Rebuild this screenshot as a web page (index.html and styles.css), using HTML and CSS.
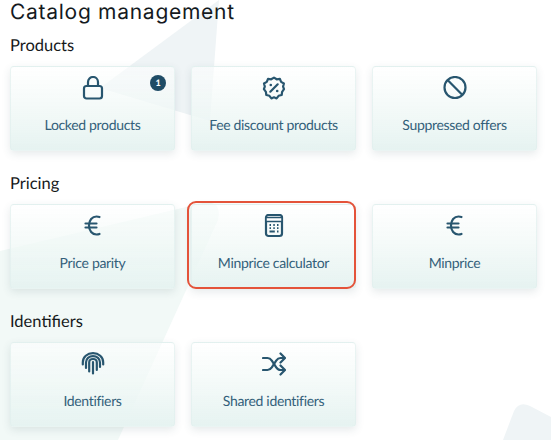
FILE: index.html
```html
<!DOCTYPE html>
<html lang="en">
<head>
<meta charset="utf-8">
<title>Catalog management</title>
<link rel="stylesheet" href="styles.css">
</head>
<body>
<svg class="backdrop" viewBox="0 0 551 440" aria-hidden="true">
  <path class="shape-grey" d="M219 0 L210 121 L100 88 Z"/>
  <path class="shape-green" d="M0 251 L203 203 Q222 200 218 220 L118 440 L0 440 Z"/>
  <path class="shape-grey" d="M503 440 L514 411 Q519 401 530 406 L551 417 L551 440 Z"/>
</svg>
<main class="page">
  <h1 class="title">Catalog management</h1>

  <section class="group">
    <h2 class="group-title">Products</h2>
    <div class="cards">
      <a class="card">
        <span class="badge">1</span>
        <svg class="icon" viewBox="0 0 24 24"><rect x="3" y="10" width="18" height="12.500" rx="2.500"/><path d="M7 10V6a5 5 0 0 1 10 0v4"/></svg>
        <span class="label">Locked products</span>
      </a>
      <a class="card">
        <svg class="icon" viewBox="0 0 24 24"><path d="M12 1.600l2.700 1.700 3.200-.4 1.200 3 2.800 1.600-.8 3.100.9 2.600-1.900 2.600-.4 3.200-3.100.8-2 2.600-2.600-1.100-2.600 1.100-2-2.600-3.100-.8-.4-3.200L1.900 13.200l.9-2.600L2 7.500l2.800-1.600 1.200-3 3.200.4z"/><path d="M8.300 15.700l7.400-7.400"/><circle class="dot" cx="8.800" cy="9" r="1.300"/><circle class="dot" cx="15.200" cy="15" r="1.300"/></svg>
        <span class="label">Fee discount products</span>
      </a>
      <a class="card">
        <svg class="icon" viewBox="0 0 24 24"><circle cx="12" cy="11.500" r="10.500"/><path d="M4.800 4.300l14.400 14.400"/></svg>
        <span class="label">Suppressed offers</span>
      </a>
    </div>
  </section>

  <section class="group">
    <h2 class="group-title">Pricing</h2>
    <div class="cards">
      <a class="card">
        <svg class="icon" viewBox="0 0 24 24"><path d="M18.500 3a9 9 0 0 0-3-.5C11.200 2.500 8 6.300 8 11.500s3.200 9 7.500 9a9 9 0 0 0 3-.5"/><path d="M4.500 9.500h11M4.500 13.500h11"/></svg>
        <span class="label">Price parity</span>
      </a>
      <a class="card card-selected">
        <svg class="icon" viewBox="0 0 24 24"><rect x="4" y="1" width="16" height="21" rx="2.500"/><path class="fill" d="M4 3.500h16v4H4z"/><path class="keys" d="M7.500 11h1.500M11.300 11h1.500M15 11h1.500M7.500 14.200h1.500M11.300 14.200h1.500M15 14.200h1.500M7.500 17.500h5.300M15 17.500h1.500"/></svg>
        <span class="label">Minprice calculator</span>
      </a>
      <a class="card">
        <svg class="icon" viewBox="0 0 24 24"><path d="M18.500 3a9 9 0 0 0-3-.5C11.200 2.500 8 6.300 8 11.500s3.200 9 7.500 9a9 9 0 0 0 3-.5"/><path d="M4.500 9.500h11M4.500 13.500h11"/></svg>
        <span class="label">Minprice</span>
      </a>
    </div>
  </section>

  <section class="group">
    <h2 class="group-title">Identifiers</h2>
    <div class="cards">
      <a class="card">
        <svg class="icon" viewBox="0 0 24 24"><path d="M1.800 12.500V10.500C1.800 5 6.300 1.200 12 1.200S22.200 5 22.200 10.500v2"/><path d="M5 16v-5.500c0-3.800 3.100-6.400 7-6.400s7 2.600 7 6.400V15"/><path d="M8.200 19.500v-9c0-2.100 1.700-3.500 3.800-3.500s3.800 1.400 3.800 3.500V18"/><path d="M12 10v11.500"/></svg>
        <span class="label">Identifiers</span>
      </a>
      <a class="card">
        <svg class="icon" viewBox="0 0 24 24"><path d="M1 6h4.500c2 0 3.200 1 4.300 2.600l4.400 6.800c1 1.600 2.200 2.600 4.300 2.600H22"/><path d="M1 18h4.500c2 0 3.200-1 4.300-2.600l4.400-6.800C15.300 7 16.500 6 18.500 6H22"/><path d="M18.500 1.500L23 6l-4.500 4.500M18.500 13.500L23 18l-4.500 4.500"/></svg>
        <span class="label">Shared identifiers</span>
      </a>
    </div>
  </section>
</main>
</body>
</html>
```

FILE: styles.css
```css
* { box-sizing: border-box; }

html, body {
  margin: 0;
  height: 440px;
  overflow: hidden;
  background: #fff;
}

body {
  position: relative;
  font-family: "Lato", "Liberation Sans", sans-serif;
  text-rendering: geometricPrecision;
}

.backdrop {
  position: absolute;
  inset: 0;
  width: 551px;
  height: 440px;
}

.shape-grey { fill: #eff4f6; }
.shape-green { fill: #f2f9f7; }

.page {
  position: relative;
  padding: 0 10px;
}

.title {
  margin: 0;
  height: 33px;
  font-family: "Inter", "Open Sans", sans-serif;
  font-size: 21px;
  font-weight: 400;
  line-height: 26px;
  letter-spacing: 0.72px;
  color: #141a1e;
}

.group { height: 138px; }

.group-title {
  margin: 0;
  height: 33px;
  padding-top: 2px;
  font-size: 16.500px;
  font-weight: 400;
  line-height: 21px;
  color: #16191b;
}

.cards {
  display: grid;
  grid-template-columns: repeat(3, 165px);
  gap: 16px;
}

.card {
  position: relative;
  display: flex;
  flex-direction: column;
  align-items: center;
  height: 85px;
  padding-top: 9px;
  border: 1px solid rgba(225, 240, 238, 0.7);
  border-radius: 4px;
  background: linear-gradient(180deg, rgba(255, 255, 255, 0.55) 0%, rgba(240, 248, 246, 0.75) 50%, #e6f3f1 100%);
  box-shadow: 0 3px 8px rgba(50, 80, 90, 0.12);
}

.card-selected::after {
  content: "";
  position: absolute;
  inset: -4px -1px -1px -5px;
  border: 2px solid #e4533a;
  border-radius: 9px;
}

.icon {
  width: 24px;
  height: 24px;
  fill: none;
  stroke: #28566f;
  stroke-width: 2.200;
  stroke-linecap: round;
  stroke-linejoin: round;
}

.icon .dot { fill: #28566f; stroke: none; }
.icon .fill { fill: #fff; stroke-width: 1.500; }
.icon .keys { stroke-width: 1.800; stroke-linecap: butt; }

.label {
  margin-top: 15px;
  font-size: 14px;
  line-height: 20px;
  letter-spacing: -0.33px;
  color: #33607a;
}

.badge {
  position: absolute;
  top: 8px;
  right: 8px;
  width: 16px;
  height: 16px;
  border-radius: 50%;
  background: #1f4c66;
  color: #fff;
  font-size: 9px;
  font-weight: 900;
  line-height: 16px;
  text-align: center;
}
```
